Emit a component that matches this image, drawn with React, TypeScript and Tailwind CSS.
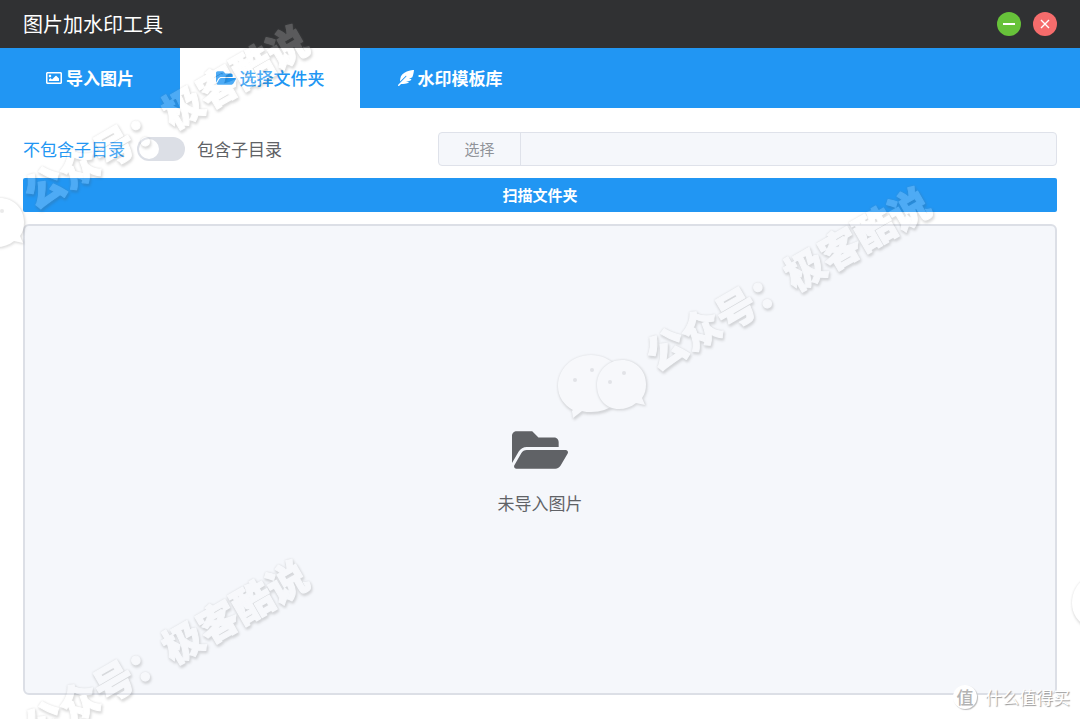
import React, { useState } from 'react';
import clsx from 'clsx';
import { FaFeatherAlt, FaFolderOpen, FaRegImage } from 'react-icons/fa';

const tabs = [
  { id: 'import', label: '导入图片', icon: FaRegImage, iconClass: 'size-4' },
  { id: 'folder', label: '选择文件夹', icon: FaFolderOpen, iconClass: 'size-5' },
  { id: 'templates', label: '水印模板库', icon: FaFeatherAlt, iconClass: 'size-4' },
];

const stamps = [
  { x: 667, y: 350, text: '公众号：极客酷说' },
  { x: 45, y: 188, text: '公众号：极客酷说' },
  { x: 45, y: 723, text: '公众号：极客酷说' },
  { x: 1181, y: 567, text: '' },
];

const TitleBar: React.FC = () => (
  <header className="flex h-12 items-center justify-between bg-[#303133] px-[23px]">
    <h1 className="text-xl leading-6 text-white">图片加水印工具</h1>
    <div className="flex items-center gap-3">
      <button
        aria-label="最小化"
        className="flex size-6 items-center justify-center rounded-full bg-[#67c23a] text-white"
      >
        <svg viewBox="0 0 24 24" className="size-6" stroke="currentColor" strokeWidth="2">
          <path d="M6 12h12" />
        </svg>
      </button>
      <button
        aria-label="关闭"
        className="flex size-6 items-center justify-center rounded-full bg-[#f56c6c] text-white"
      >
        <svg viewBox="0 0 24 24" className="size-6" stroke="currentColor" strokeWidth="1.4">
          <path d="M8 8l8 8M16 8l-8 8" />
        </svg>
      </button>
    </div>
  </header>
);

interface TabBarProps {
  active: string;
  onChange: (id: string) => void;
}

const TabBar: React.FC<TabBarProps> = ({ active, onChange }) => (
  <nav className="flex h-[60px] bg-[#2196f3]">
    {tabs.map(({ id, label, icon: Icon, iconClass }) => (
      <button
        key={id}
        onClick={() => onChange(id)}
        className={clsx(
          'flex w-[180px] items-center justify-center gap-1 text-[17px] leading-6',
          active === id ? 'bg-white font-medium text-[#2196f3]' : 'font-bold text-white'
        )}
      >
        <Icon className={iconClass} />
        {label}
      </button>
    ))}
  </nav>
);

interface StampProps {
  x: number;
  y: number;
  text: string;
}

// Diagonal account stamp, drawn once per entry in `stamps`
const Stamp: React.FC<StampProps> = ({ x, y, text }) => (
  <g transform={`translate(${x} ${y})`}>
    <g className="[filter:drop-shadow(0_0_1px_#777)_drop-shadow(1px_2px_1px_#444)]">
      <path
        fill="#fff"
        d="M-76 5C-95 5-109 19-109 36c0 11 6 19 15 24l-1 1 1 7 9-7c3 1 6 1 9 1 19 0 33-12 33-27S-57 5-76 5z"
      />
      <g fill="#999">
        <circle cx="-92" cy="30" r="2" />
        <circle cx="-75" cy="20" r="2" />
      </g>
    </g>
    <g className="[filter:drop-shadow(0_0_1px_#777)_drop-shadow(1px_1px_1px_#555)]">
      <path
        fill="#fff"
        d="M-45 10c-14 0-25 11-25 25s9 24 22 24c6 0 12-2 17-6l9 2-3-7c3-4 4-9 4-14C-21 20-32 10-45 10z"
      />
      <g fill="#999">
        <circle cx="-57" cy="32" r="2" />
        <circle cx="-43" cy="23" r="2" />
      </g>
    </g>
    {text && (
      <g className="[filter:drop-shadow(0_0_1px_#777)_drop-shadow(1px_2px_1px_#444)]">
        <text
          transform="rotate(-30)"
          x="-20"
          y="14"
          fill="#fff"
          stroke="#fff"
          strokeWidth="1"
          strokeLinejoin="round"
          className="text-[40px] font-black"
        >
          {text}
        </text>
      </g>
    )}
  </g>
);

const Watermarks: React.FC = () => (
  <div className="pointer-events-none absolute inset-0 overflow-hidden">
    <svg className="h-full w-full opacity-20">
      {stamps.map((s) => (
        <Stamp key={`${s.x}-${s.y}`} {...s} />
      ))}
    </svg>
    <div className="absolute right-2.5 bottom-2.5 flex items-center gap-2">
      <span className="flex size-6 items-center justify-center rounded-full bg-white text-[17px] leading-6 font-medium text-[#b4b4b4] shadow-[1px_1px_1px_#bbb]">
        值
      </span>
      <span className="text-[17px] leading-6 text-white [text-shadow:1px_1px_1px_#999]">
        什么值得买
      </span>
    </div>
  </div>
);

export default function App() {
  const [active, setActive] = useState('folder');
  const [recursive, setRecursive] = useState(false);

  return (
    <div
      className="relative flex min-h-screen flex-col bg-white text-[#606266]"
      style={{ fontFamily: '"Noto Sans CJK SC", sans-serif' }}
    >
      <TitleBar />
      <TabBar active={active} onChange={setActive} />

      <main className="flex flex-1 flex-col px-[23px] py-6">
        <div className="flex items-center">
          <label className="flex w-[415px] shrink-0 items-center gap-3 text-[17px] leading-6">
            <span className={recursive ? '' : 'text-[#2196f3]'}>不包含子目录</span>
            <input
              type="checkbox"
              role="switch"
              checked={recursive}
              onChange={(e) => setRecursive(e.target.checked)}
              className="h-6 w-12 appearance-none rounded-full bg-[#dcdfe6] p-[2px] before:block before:size-5 before:rounded-full before:bg-white checked:bg-[#2196f3] checked:before:ml-6"
            />
            <span className={recursive ? 'text-[#2196f3]' : ''}>包含子目录</span>
          </label>
          <div className="flex h-[34px] flex-1 overflow-hidden rounded border border-[#dfe2ea] bg-[#f5f7fb]">
            <button className="w-[82px] border-r border-[#dfe2ea] text-[15px] leading-6 text-[#909399]">
              选择
            </button>
            <input
              aria-label="文件夹路径"
              readOnly
              className="min-w-0 flex-1 px-4 text-[15px] outline-none"
            />
          </div>
        </div>

        <button className="mt-3 h-[34px] rounded-xs bg-[#2196f3] text-[15px] leading-6 font-bold text-white">
          扫描文件夹
        </button>

        <section className="mt-3 flex flex-1 flex-col items-center justify-center gap-4 rounded-md border-2 border-[#dcdfe6] bg-[#f5f7fb] pt-5">
          <FaFolderOpen className="h-[50px] w-14" />
          <p className="text-[17px] leading-6">未导入图片</p>
        </section>
      </main>

      <Watermarks />
    </div>
  );
}
